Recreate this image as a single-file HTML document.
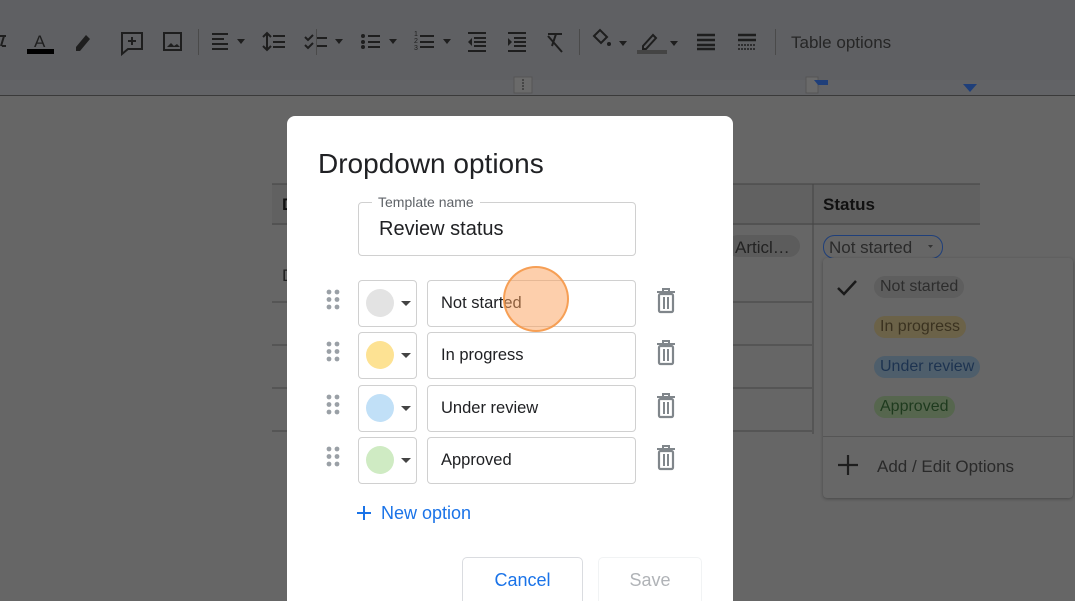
<!DOCTYPE html>
<html><head><meta charset="utf-8"><style>
*{box-sizing:border-box;margin:0;padding:0}
html,body{width:1075px;height:601px;overflow:hidden}
body{background:#666;font-family:"Liberation Sans",Arial,sans-serif;position:relative}
.abs{position:absolute}
.tb{left:0;top:0;width:1075px;height:80px;background:#5f6063}
.ruler{left:0;top:80px;width:1075px;height:16px;background:#626366;border-bottom:1px solid #3a3a3a}
.dlg{left:287px;top:116px;width:446px;height:485px;background:#fff;border-radius:8px 8px 0 0}
.box{position:absolute;border:1px solid #d0d0d0;border-radius:4px;background:#fff}
.chip{display:inline-block;border-radius:11px;padding:2px 6px;font-size:16px}
</style></head><body>
<div class="abs tb"></div>
<div class="abs ruler"></div>
<svg class="abs" style="left:0;top:0" width="1075" height="96">
<g fill="#1e1e1e" stroke="#1e1e1e">
<path d="M0 36h6M2 46h4M4 36l-3 10" stroke-width="2" fill="none"/>
<text x="34" y="47" font-size="17" stroke="none" font-family="Liberation Sans">A</text>
<rect x="27" y="49" width="27" height="5" stroke="none" fill="#000"/>
<path d="M76 47l10-12 4 4-10 12h-4z" stroke="none"/>
<path d="M122 33h20v16h-14l-6 5z" fill="none" stroke-width="2"/><path d="M132 37v8M128 41h8" stroke-width="2"/>
<rect x="164" y="33" width="17" height="17" fill="none" stroke-width="2"/><path d="M167 47l4-4 3 3 3-2 3 3z" stroke="none"/>
<path d="M212 34h16M212 39h12M212 44h16M212 49h16" stroke-width="2"/><path d="M237 39h8l-4 5z" stroke="none"/>
<path d="M267 33v17M263 37l4-4 4 4M263 46l4 4 4-4M273 36h12M273 42h12M273 47h12" stroke-width="2" fill="none"/>
<path d="M305 37l3 3 5-5M305 45l3 3 5-5M317 38h10M317 46h10" stroke-width="2" fill="none"/><path d="M335 39h8l-4 5z" stroke="none"/>
<circle cx="363" cy="36" r="2" stroke="none"/><circle cx="363" cy="42" r="2" stroke="none"/><circle cx="363" cy="47" r="2" stroke="none"/><path d="M368 36h12M368 42h12M368 47h12" stroke-width="2"/><path d="M389 39h8l-4 5z" stroke="none"/>
<text x="414" y="36" font-size="7" stroke="none">1</text><text x="414" y="43" font-size="7" stroke="none">2</text><text x="414" y="50" font-size="7" stroke="none">3</text>
<path d="M420 36h14M420 42h14M420 47h14" stroke-width="2"/><path d="M443 39h8l-4 5z" stroke="none"/>
<path d="M468 33h18M474 38h12M474 42h12M474 46h12M468 51h18" stroke-width="2"/><path d="M472 38v8l-4-4z" stroke="none"/>
<path d="M508 33h18M514 38h12M514 42h12M514 46h12M508 51h18" stroke-width="2"/><path d="M508 38v8l4-4z" stroke="none"/>
<path d="M548 34h14M556 34l-4 12M548 36l14 16" stroke-width="2" fill="none"/>
<path d="M594 36l6-6 7 7-6 6z" fill="none" stroke-width="2"/><circle cx="609" cy="44" r="2" stroke="none"/><path d="M619 41h8l-4 5z" stroke="none"/>
<path d="M643 46l10-11 3 3-10 11h-3z" fill="none" stroke-width="2"/><rect x="637" y="50" width="30" height="4" fill="#444" stroke="none"/><path d="M670 41h8l-4 5z" stroke="none"/>
<path d="M697 35h18M697 40h18M697 45h18M697 49h18" stroke-width="2.5"/>
<path d="M738 35h18M738 40h18" stroke-width="2.5"/><path d="M738 45h18M738 49h18" stroke-width="1.5" stroke-dasharray="2 1"/>
</g>
<rect x="316" y="29" width="1" height="26" fill="#4a4a4a"/><rect x="198" y="29" width="1" height="26" fill="#4a4a4a"/>
<rect x="579" y="29" width="1" height="26" fill="#4a4a4a"/><rect x="775" y="29" width="1" height="26" fill="#4a4a4a"/>
<text x="791" y="48" font-size="17" fill="#262626" font-family="Liberation Sans">Table options</text>
<rect x="514" y="77" width="18" height="16" fill="#6a6a6a" stroke="#555"/><path d="M523 79v12" stroke="#222" stroke-dasharray="2 1"/>
<rect x="806" y="77" width="12" height="16" fill="#6a6a6a" stroke="#555"/><path d="M814 80h14v5h-10l5 6z" fill="#1f3f7a"/>
<path d="M963 84h14l-7 8z" fill="#1f3f7a"/>
</svg>
<svg class="abs" style="left:0;top:96px" width="1075" height="505">
<rect x="272" y="88" width="708" height="41" fill="#616161"/>
<path d="M272 88h708M272 128h708M272 206h540M272 249h540M272 292h540M272 335h540M813 88v250" stroke="#444" fill="none"/>
<text x="823" y="114" font-size="17" font-weight="bold" fill="#111" font-family="Liberation Sans">Status</text>
<text x="282" y="114" font-size="17" font-weight="bold" fill="#111">D</text>
<text x="282" y="185" font-size="17" fill="#222">D</text>
<rect x="727" y="139" width="73" height="22" rx="11" fill="#5c5c5c"/>
<text x="735" y="157" font-size="17" fill="#222">Articl…</text>
<rect x="823.5" y="139.5" width="119" height="23" rx="11" fill="#666" stroke="#1f3f7a"/>
<text x="829" y="157" font-size="17" fill="#2a2a2a">Not started</text><path d="M928 149h5l-2.5 3z" fill="#333"/>
</svg>
<div class="abs" style="left:823px;top:258px;width:250px;height:240px;background:#676767;border-radius:4px;box-shadow:0 1px 3px rgba(0,0,0,.3)">
<svg class="abs" style="left:13px;top:20px" width="26" height="20"><path d="M2 10l6 6 12-13" stroke="#1a1a1a" stroke-width="2.5" fill="none"/></svg>
<div class="abs" style="left:51px;top:18px"><span class="chip" style="background:#5e5e5e;color:#2d2d2d">Not started</span></div>
<div class="abs" style="left:51px;top:58px"><span class="chip" style="background:#6b6248;color:#3a3220">In progress</span></div>
<div class="abs" style="left:51px;top:98px"><span class="chip" style="background:#4e5e6b;color:#1d3350">Under review</span></div>
<div class="abs" style="left:51px;top:138px"><span class="chip" style="background:#56664e;color:#1e3a1e">Approved</span></div>
<div class="abs" style="left:0;top:178px;width:250px;height:1px;background:#555"></div>
<svg class="abs" style="left:14px;top:196px" width="22" height="22"><path d="M11 1v20M1 11h20" stroke="#1e1e1e" stroke-width="2.2"/></svg>
<div class="abs" style="left:54px;top:199px;font-size:17px;color:#2a2a2a">Add / Edit Options</div>
</div>
<div class="abs dlg">
<div class="abs" style="left:31px;top:32px;font-size:28px;color:#202124">Dropdown options</div>
<div class="box" style="left:71px;top:86px;width:278px;height:54px"></div>
<div class="abs" style="left:85px;top:78px;background:#fff;padding:0 6px;font-size:14px;color:#5f6368">Template name</div>
<div class="abs" style="left:92px;top:102px;font-size:20px;color:#202124">Review status</div>
</div>
<div id="rows"></div>
<script>
var r=[[280,"#e3e3e3","Not started"],[332,"#fde293","In progress"],[385,"#c1e0f7","Under review"],[437,"#cfebc3","Approved"]],h="";
r.forEach(function(o){var y=o[0];
h+='<svg class="abs" style="left:326px;top:'+(y+9)+'px" width="14" height="22"><g fill="#9aa0a6"><circle cx="3" cy="3" r="2.4"/><circle cx="11" cy="3" r="2.4"/><circle cx="3" cy="10.5" r="2.4"/><circle cx="11" cy="10.5" r="2.4"/><circle cx="3" cy="18" r="2.4"/><circle cx="11" cy="18" r="2.4"/></g></svg>';
h+='<div class="box" style="left:358px;top:'+y+'px;width:59px;height:47px"><div class="abs" style="left:7px;top:8px;width:28px;height:28px;border-radius:50%;background:'+o[1]+'"></div><div class="abs" style="left:42px;top:20px;border:5px solid transparent;border-top:5px solid #444;border-bottom:0"></div></div>';
h+='<div class="box" style="left:427px;top:'+y+'px;width:209px;height:47px"><div class="abs" style="left:13px;top:13px;font-size:16.5px;color:#202124">'+o[2]+'</div></div>';
h+='<svg class="abs" style="left:655px;top:'+(y+8)+'px" width="22" height="26"><path d="M2 4h18M8 4V1h6v3" stroke="#80868b" stroke-width="2" fill="none"/><rect x="4" y="6" width="14" height="18" rx="1.5" fill="none" stroke="#80868b" stroke-width="2.2"/><path d="M9 9v12M13 9v12" stroke="#80868b" stroke-width="2"/></svg>';});
document.getElementById("rows").innerHTML=h;
</script>
<svg class="abs" style="left:356px;top:505px" width="16" height="16"><path d="M8 1v14M1 8h14" stroke="#1a73e8" stroke-width="2"/></svg>
<div class="abs" style="left:381px;top:503px;font-size:18px;color:#1a73e8">New option</div>
<div class="abs" style="left:462px;top:557px;width:121px;height:50px;border:1px solid #dadce0;border-radius:5px;text-align:center;padding-top:12px;font-size:18px;color:#1a73e8">Cancel</div>
<div class="abs" style="left:598px;top:557px;width:104px;height:50px;border:1px solid #f1f3f4;border-radius:5px;text-align:center;padding-top:12px;font-size:18px;color:#b0b3b7">Save</div>
<div class="abs" style="left:503px;top:266px;width:66px;height:66px;border-radius:50%;background:rgba(251,160,90,.5);border:2px solid rgba(245,150,70,.85)"></div>
</body></html>
